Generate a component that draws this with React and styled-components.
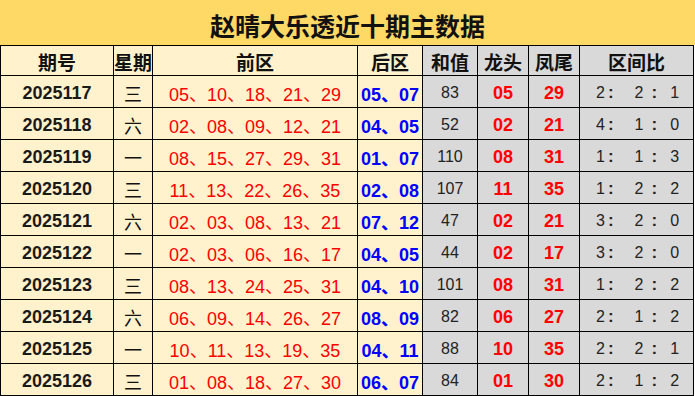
import React from 'react';
import styled, { createGlobalStyle } from 'styled-components';

const GlobalStyle = createGlobalStyle`
  body {
    margin: 0;
    background: #fff;
    font-family: "Liberation Sans", "Noto Sans CJK SC", sans-serif;
  }
`;

const colors = {
  title: '#ffd966',
  cream: '#fff2cc',
  gray: '#d9d9d9',
  red: '#ff0000',
  blue: '#0000ff',
  ink: '#111',
  line: '#000'
};

const Page = styled.div`
  width: 695px;
`;

const Title = styled.h1`
  margin: 0;
  height: 45px;
  display: flex;
  align-items: center;
  justify-content: center;
  background: ${colors.title};
  font-family: "Noto Sans CJK SC", sans-serif;
  font-size: 25px;
  font-weight: 700;
  color: ${colors.ink};
  padding-top: 4px;
  box-sizing: border-box;
`;

const Grid = styled.div`
  width: 694px;
  box-sizing: border-box;
  display: grid;
  grid-template-columns: 112px 38px 204px 64px 54px 50px 50px 113px;
  grid-template-rows: 29px repeat(10, 31px);
  gap: 1px;
  background: ${colors.line};
  border: 1px solid ${colors.line};
`;

const Cell = styled.div`
  display: flex;
  align-items: center;
  justify-content: center;
  background: ${p => (p.$gray ? colors.gray : colors.cream)};
  white-space: nowrap;
  overflow: hidden;
  padding-top: 3px;
  box-sizing: border-box;
`;

const HeadCell = styled(Cell)`
  font-family: "Noto Sans CJK SC", sans-serif;
  font-size: 19px;
  font-weight: 700;
  color: ${colors.ink};
  padding-top: 1px;
`;

const Issue = styled.span`
  font-size: 18px;
  font-weight: 700;
  color: #1a1a1a;
`;

const Day = styled.span`
  font-family: "Noto Sans CJK SC", sans-serif;
  font-size: 18px;
  color: ${colors.ink};
`;

const Balls = styled.span`
  font-size: 18px;
  font-weight: ${p => (p.$bold ? 700 : 400)};
  color: ${p => p.$color};
`;

const Sum = styled.span`
  font-size: 16px;
  color: #222;
`;

const Ratio = styled.span`
  display: flex;
  align-items: center;
  font-size: 16px;
  color: #222;
  margin-left: 2px;
`;

const Colon = styled.span`
  font-weight: 700;
  font-size: 17px;
  margin: ${p => p.$m};
`;

const headers = [
  ['期号', false],
  ['星期', false],
  ['前区', false],
  ['后区', false],
  ['和值', true],
  ['龙头', true],
  ['凤尾', true],
  ['区间比', true]
];

const draws = [
  ['2025117', '三', '05、10、18、21、29', '05、07', '83', '05', '29', '2:2:1'],
  ['2025118', '六', '02、08、09、12、21', '04、05', '52', '02', '21', '4:1:0'],
  ['2025119', '一', '08、15、27、29、31', '01、07', '110', '08', '31', '1:1:3'],
  ['2025120', '三', '11、13、22、26、35', '02、08', '107', '11', '35', '1:2:2'],
  ['2025121', '六', '02、03、08、13、21', '07、12', '47', '02', '21', '3:2:0'],
  ['2025122', '一', '02、03、06、16、17', '04、05', '44', '02', '17', '3:2:0'],
  ['2025123', '三', '08、13、24、25、31', '04、10', '101', '08', '31', '1:2:2'],
  ['2025124', '六', '06、09、14、26、27', '08、09', '82', '06', '27', '2:1:2'],
  ['2025125', '一', '10、11、13、19、35', '04、11', '88', '10', '35', '2:2:1'],
  ['2025126', '三', '01、08、18、27、30', '06、07', '84', '01', '30', '2:1:2']
];

function RatioText({ value }) {
  const [a, b, c] = value.split(':');
  return (
    <Ratio>
      {a}
      <Colon $m="0 21px 0 3px">:</Colon>
      {b}
      <Colon $m="0 13px 0 8px">:</Colon>
      {c}
    </Ratio>
  );
}

export default function App() {
  return (
    <Page>
      <GlobalStyle />
      <Title>赵晴大乐透近十期主数据</Title>
      <Grid>
        {headers.map(([label, gray]) => (
          <HeadCell key={label} $gray={gray}>{label}</HeadCell>
        ))}
        {draws.map(([issue, day, front, back, sum, head, tail, ratio]) => (
          <React.Fragment key={issue}>
            <Cell><Issue>{issue}</Issue></Cell>
            <Cell><Day>{day}</Day></Cell>
            <Cell><Balls $color={colors.red}>{front}</Balls></Cell>
            <Cell><Balls $color={colors.blue} $bold>{back}</Balls></Cell>
            <Cell $gray><Sum>{sum}</Sum></Cell>
            <Cell $gray><Balls $color={colors.red} $bold>{head}</Balls></Cell>
            <Cell $gray><Balls $color={colors.red} $bold>{tail}</Balls></Cell>
            <Cell $gray><RatioText value={ratio} /></Cell>
          </React.Fragment>
        ))}
      </Grid>
    </Page>
  );
}
